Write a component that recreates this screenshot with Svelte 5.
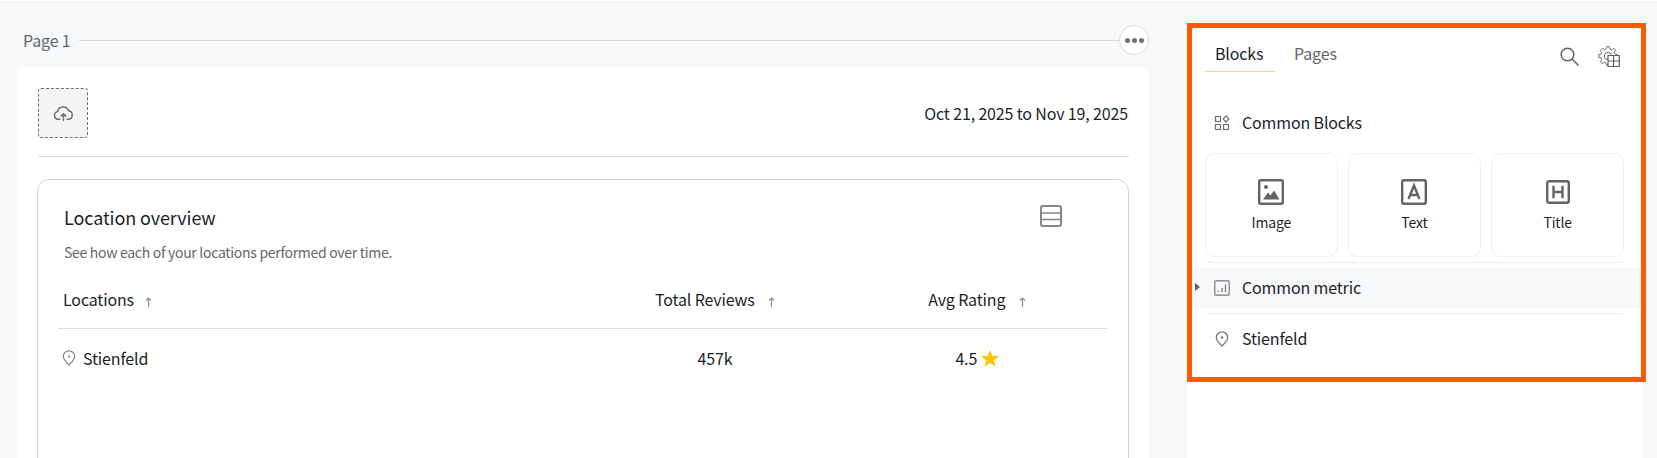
<script>
  const tiles = [
    { label: 'Image', kind: 'image' },
    { label: 'Text', kind: 'text' },
    { label: 'Title', kind: 'title' }
  ];

  // Outline of an eight-toothed gear, for the panel's settings icon.
  function gearPath(cx, cy, outer, inner, teeth) {
    const step = (Math.PI * 2) / teeth;
    const pts = [];
    for (let i = 0; i < teeth; i++) {
      const a = i * step - Math.PI / 2;
      const at = (r, o) => {
        const x = cx + r * Math.cos(a + o * step);
        const y = cy + r * Math.sin(a + o * step);
        return x.toFixed(2) + ' ' + y.toFixed(2);
      };
      pts.push(at(inner, -0.36), at(outer, -0.17), at(outer, 0.17), at(inner, 0.36));
    }
    return 'M' + pts.join('L') + 'Z';
  }
  const gear = gearPath(10, 10, 9.5, 7.2, 8);
</script>

<div class="app">
  <div class="topbar"></div>
  <div class="shell">
    <main class="main">
      <div class="page-head">
        <span class="page-name">Page 1</span>
        <span class="page-line"></span>
        <button class="more" aria-label="More"><i></i><i></i><i></i></button>
      </div>
      <section class="sheet">
        <div class="sheet-top">
          <div class="upload">
            <svg width="21" height="21" viewBox="0 0 20 20" fill="none" stroke="#6b6b70" stroke-width="1.400" stroke-linecap="round" stroke-linejoin="round">
              <path d="M6.500 15.500H4.800A3.700 3.700 0 0 1 4.300 8.200 5.500 5.500 0 0 1 14.800 7.300 4.200 4.200 0 0 1 15.200 15.500H13.500" />
              <path d="M10 16.500V10.500M7.800 12.500 10 10.200l2.200 2.300" />
            </svg>
          </div>
          <div class="date">Oct 21, 2025 to Nov 19, 2025</div>
        </div>
        <hr class="sheet-rule" />
        <div class="widget">
          <div class="widget-head">
            <h2>Location overview</h2>
            <svg class="table-icon" width="22" height="22" viewBox="0 0 22 22" fill="none" stroke="#85858a" stroke-width="2">
              <rect x="1" y="1" width="20" height="20" rx="2" />
              <path d="M1 8h20M1 14.500h20" stroke-width="1.500" />
            </svg>
          </div>
          <p class="sub">See how each of your locations performed over time.</p>
          <div class="table-row head-row">
            <div class="cell first">Locations <svg class="sort" width="7" height="10" viewBox="0 0 7 10" fill="none" stroke="#8e8e93" stroke-width="1.200"><path d="M3.500 10V1M1 3.500 3.500 1 6 3.500" /></svg></div>
            <div class="cell mid">Total Reviews <svg class="sort" width="7" height="10" viewBox="0 0 7 10" fill="none" stroke="#8e8e93" stroke-width="1.200"><path d="M3.500 10V1M1 3.500 3.500 1 6 3.500" /></svg></div>
            <div class="cell mid">Avg Rating <svg class="sort" width="7" height="10" viewBox="0 0 7 10" fill="none" stroke="#8e8e93" stroke-width="1.200"><path d="M3.500 10V1M1 3.500 3.500 1 6 3.500" /></svg></div>
          </div>
          <div class="table-row body-row">
            <div class="cell first pin-cell">
              <svg width="14" height="16" viewBox="0 0 14 16" fill="none" stroke="#77777c" stroke-width="1.100">
                <path d="M7 15C4 12 1.300 9.500 1.300 6.500a5.700 5.700 0 0 1 11.400 0C12.700 9.500 10 12 7 15Z" />
                <circle cx="7" cy="6.500" r="1" fill="#77777c" stroke="none" />
              </svg>
              <span>Stienfeld</span>
            </div>
            <div class="cell mid">457k</div>
            <div class="cell mid">4.5
              <svg class="star" width="18" height="17" viewBox="0 0 18 17"><path fill="#ffc400" d="M9 0l2.400 6h6.600l-5.200 4.200 1.900 6.500L9 13l-5.700 3.700 1.900-6.500L0 6h6.600Z" /></svg>
            </div>
          </div>
        </div>
      </section>
    </main>

    <aside class="panel">
      <div class="tabs">
        <div class="tab active">Blocks</div>
        <div class="tab">Pages</div>
        <div class="tools">
          <svg width="19" height="19" viewBox="0 0 19 19" fill="none" stroke="#5f5f64" stroke-width="1.500" stroke-linecap="round">
            <circle cx="7.500" cy="7.500" r="6.300" />
            <path d="M12.200 12.200 18 18" />
          </svg>
          <svg width="22" height="21" viewBox="0 0 22 21" fill="none" stroke="#6a6a6f" stroke-width="1" stroke-linejoin="round">
            <path d={gear} />
            <circle cx="10" cy="10" r="3.600" />
            <rect x="10" y="9.500" width="11.300" height="11" fill="#fff" stroke="#5f5f64" stroke-width="1.200" />
            <path d="M15.600 9.500V20.500M10 15h11.300" stroke="#5f5f64" stroke-width="1.200" />
          </svg>
        </div>
      </div>

      <div class="row blocks-title">
        <span class="slot"></span>
        <svg width="16" height="16" viewBox="0 0 16 16" fill="none" stroke="#6e6e73" stroke-width="1.200">
          <rect x="1.500" y="1.500" width="5" height="5" />
          <rect x="1.500" y="9.500" width="5" height="5" />
          <rect x="9.500" y="9.500" width="5" height="5" />
          <path d="M12 .9 14.800 4 12 7 9.200 4Z" />
        </svg>
        <span>Common Blocks</span>
      </div>

      <div class="tiles">
        {#each tiles as t}
          <div class="tile">
            {#if t.kind === 'image'}
              <svg width="26" height="26" viewBox="0 0 26 26" fill="none">
                <rect x="1.200" y="1.200" width="23.600" height="23.600" rx="1.500" stroke="#636369" stroke-width="2.400" />
                <circle cx="8" cy="8" r="2" fill="#636369" />
                <path fill="#636369" d="M5 20.500 10 13.500l2.500 3L16 11.500l5.500 9Z" />
              </svg>
            {:else if t.kind === 'text'}
              <svg width="26" height="26" viewBox="0 0 26 26" fill="none" stroke="#636369">
                <rect x="1.200" y="1.200" width="23.600" height="23.600" rx="1.500" stroke-width="2.400" />
                <path d="M7.500 20 13 6.500l5.500 13.500M9.200 16h7.600" stroke-width="2.400" />
              </svg>
            {:else}
              <svg width="24" height="24" viewBox="0 0 24 24" fill="none" stroke="#636369">
                <rect x="1.200" y="1.200" width="21.600" height="21.600" rx="2" stroke-width="2.400" />
                <path d="M7.500 5.800v12.400M16.500 5.800v12.400M7.500 12h9" stroke-width="2.400" />
              </svg>
            {/if}
            <span>{t.label}</span>
          </div>
        {/each}
      </div>

      <hr class="rule" />
      <div class="row metric">
        <span class="slot"><span class="arrow"></span></span>
        <svg width="16" height="16" viewBox="0 0 16 16" fill="none" stroke="#77777c" stroke-width="1.200">
          <rect x=".8" y=".8" width="14.400" height="14.400" rx="1" />
          <path d="M4.500 12v-1.500M8 12V8M11.500 12V4.500" stroke-width="1.300" />
        </svg>
        <span>Common metric</span>
      </div>
      <hr class="rule" />
      <div class="row">
        <span class="slot"></span>
        <svg width="16" height="16" viewBox="0 0 14 16" fill="none" stroke="#6e6e73" stroke-width="1.200">
          <path d="M7 15C4 12 1.300 9.500 1.300 6.500a5.700 5.700 0 0 1 11.400 0C12.700 9.500 10 12 7 15Z" />
          <circle cx="7" cy="6.500" r="1.200" fill="#6e6e73" stroke="none" />
        </svg>
        <span>Stienfeld</span>
      </div>
    </aside>
  </div>
  <div class="frame"></div>
</div>

<style>
  :global(body) {
    margin: 0;
    background: #f7f8fa;
  }
  .app {
    position: relative;
    width: 1657px;
    height: 458px;
    overflow: hidden;
    background: #f7f8fa;
    color: #1b1f2a;
    font-family: "Noto Sans CJK SC", "Noto Sans", sans-serif;
    font-size: 16px;
    letter-spacing: -0.15px;
    line-height: 24px;
  }
  .topbar {
    height: 2px;
    background: #fff;
    border-bottom: 1px solid #ececee;
  }
  .shell {
    display: flex;
    align-items: flex-start;
  }
  .main {
    box-sizing: border-box;
    width: 1187px;
    padding: 0 38px 0 17px;
  }
  .page-head {
    display: flex;
    align-items: center;
    height: 30px;
    padding: 22px 0 12px 6px;
  }
  .page-name {
    color: #63666e;
  }
  .page-line {
    flex: 1;
    height: 1px;
    margin-left: 8px;
    background: #d6d6d9;
  }
  .more {
    display: flex;
    align-items: center;
    justify-content: center;
    gap: 2px;
    box-sizing: border-box;
    width: 30px;
    height: 30px;
    padding: 0;
    background: #fff;
    border: 1px solid #dcdcdf;
    border-radius: 50%;
  }
  .more i {
    width: 5px;
    height: 5px;
    border-radius: 50%;
    background: #717176;
  }
  .sheet {
    box-sizing: border-box;
    height: 400px;
    padding: 21px 20px 0 21px;
    background: #fff;
    border-radius: 6px;
  }
  .sheet-top {
    display: flex;
    align-items: center;
    justify-content: space-between;
  }
  .upload {
    display: flex;
    align-items: center;
    justify-content: center;
    box-sizing: border-box;
    width: 50px;
    height: 50px;
    background: #f2f4f5;
    border: 1px dashed #707074;
    border-radius: 3px;
  }
  .date {
    margin-right: 1px;
  }
  .sheet-rule {
    height: 1px;
    margin: 18px 0 22px;
    border: 0;
    background: #dedee0;
  }
  .widget {
    box-sizing: border-box;
    height: 400px;
    margin-left: -1px;
    padding: 25px 20px 0 20px;
    border: 1px solid #d3d3d6;
    border-radius: 12px;
  }
  .widget-head {
    display: flex;
    align-items: center;
    justify-content: space-between;
    height: 24px;
    padding: 0 46px 0 6px;
  }
  .table-icon {
    margin-top: -3px;
  }
  h2 {
    margin: 0;
    font-size: 18px;
    font-weight: 400;
    letter-spacing: -0.1px;
  }
  .sub {
    margin: 13px 0 0 6px;
    font-size: 14px;
    letter-spacing: -0.29px;
    line-height: 20px;
    color: #63666e;
  }
  .table-row {
    display: grid;
    grid-template-columns: 1fr 262px 262px;
    align-items: center;
  }
  .head-row {
    height: 62px;
    margin-top: 5px;
    padding-top: 2px;
    border-bottom: 1px solid #dedee0;
    box-sizing: border-box;
  }
  .body-row {
    height: 58px;
  }
  .first {
    padding-left: 5px;
  }
  .mid {
    text-align: center;
  }
  .sort {
    margin-left: 8px;
    vertical-align: -1px;
  }
  .mid .sort {
    margin-left: 10px;
  }
  .pin-cell {
    display: flex;
    align-items: center;
    gap: 7px;
    padding-left: 4px;
  }
  .star {
    vertical-align: -2px;
  }
  .panel {
    box-sizing: border-box;
    width: 456px;
    height: 440px;
    margin-top: 24px;
    padding-top: 14px;
    background: #fff;
  }
  .tabs {
    display: flex;
    align-items: flex-start;
    padding-left: 18px;
  }
  .tab {
    height: 30px;
    padding: 0 10px 0 10px;
    color: #63666e;
    text-align: center;
  }
  .tab + .tab {
    margin-left: 9px;
  }
  .tab.active {
    width: 50px;
    text-align: left;
    color: #1b1f2a;
    border-bottom: 1px solid #f7d472;
  }
  .tools {
    display: flex;
    align-items: center;
    gap: 19px;
    margin-left: auto;
    margin-right: 23px;
    padding-top: 5px;
  }
  .row {
    display: flex;
    align-items: center;
    gap: 12px;
    height: 40px;
    padding-left: 7px;
  }
  .row span:last-child {
    margin-top: -2px;
  }
  .row > .slot {
    display: flex;
    align-items: center;
    width: 20px;
    margin: 0 -12px 0 0;
  }
  .blocks-title {
    margin-top: 31px;
  }
  .arrow {
    width: 0;
    height: 0;
    margin-left: 1px;
    border-left: 5px solid #5f5f64;
    border-top: 4.500px solid transparent;
    border-bottom: 4.500px solid transparent;
  }
  .tiles {
    display: grid;
    grid-template-columns: repeat(3, 1fr);
    gap: 10.500px;
    margin: 10px 19px 0 18px;
  }
  .tile {
    display: flex;
    flex-direction: column;
    align-items: center;
    justify-content: flex-start;
    gap: 6px;
    box-sizing: border-box;
    height: 104px;
    padding-top: 25px;
    border: 1px solid #f0f0f2;
    border-radius: 10px;
    font-size: 14px;
    line-height: 22px;
  }
  .tile svg {
    height: 26px;
  }
  .rule {
    height: 1px;
    margin: 5px 20px 5px 20px;
    border: 0;
    background: #ececee;
  }
  .metric {
    background: #f7f8fa;
  }
  .frame {
    position: absolute;
    left: 1187px;
    top: 23px;
    box-sizing: border-box;
    width: 459px;
    height: 359px;
    border: 5px solid #ff5a00;
    pointer-events: none;
  }
</style>
